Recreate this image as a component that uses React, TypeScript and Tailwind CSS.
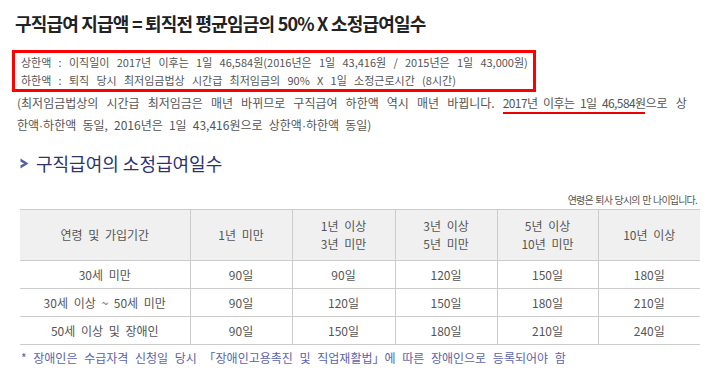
const rows = [
  { label: "30세 미만", days: ["90일", "90일", "120일", "150일", "180일"] },
  { label: "30세 이상 ~ 50세 미만", days: ["90일", "120일", "150일", "180일", "210일"] },
  { label: "50세 이상 및 장애인", days: ["90일", "150일", "180일", "210일", "240일"] },
];

// narrow middle dot (the CJK font draws it full-width)
const Dot = () => <span className="font-['Liberation_Sans']">·</span>;

const App = () => {
  return (
    <div
      className="w-[708px] h-[374px] bg-white text-[#555] overflow-hidden"
      style={{ fontFamily: '"Noto Sans CJK KR", "Noto Sans", sans-serif' }}
    >
      {/* Title */}
      <h1 className="pl-[15px] pt-[10px] h-[50px] text-[18px] font-bold tracking-[-0.8px] text-[#222] leading-[26px]">
        구직급여 지급액 = 퇴직전 평균임금의 50% X 소정급여일수
      </h1>

      {/* Upper / lower limit box */}
      <div className="ml-[12px] w-[524px] border-[3px] border-[#f00] pl-[6px] text-[11px] leading-[18px] [word-spacing:4.8px]">
        <p>상한액 : 이직일이 2017년 이후는 1일 46,584원(2016년은 1일 43,416원 / 2015년은 1일 43,000원)</p>
        <p>하한액 : 퇴직 당시 최저임금법상 시간급 최저임금의 90% X 1일 소정근로시간 (8시간)</p>
      </div>
      <p className="pl-[17px] text-[12px] leading-[22px] whitespace-nowrap [word-spacing:5.4px]">
        (최저임금법상의 시간급 최저임금은 매년 바뀌므로 구직급여 하한액 역시 매년 바뀝니다.{" "}
        <span className="border-b-2 border-[#e00] pb-[1px] tracking-[-0.6px] [word-spacing:3.5px]">
          2017년 이후는 1일 46,584원
        </span>
        으로 상
        <br />
        <span className="[word-spacing:3.5px]">
          한액<Dot />하한액 동일, 2016년은 1일 43,416원으로 상한액<Dot />하한액 동일)
        </span>
      </p>

      {/* Section heading */}
      <div className="flex items-center gap-[7px] pl-[20px] mt-[13px] h-[26px]">
        <svg width="9" height="11" viewBox="0 0 9 11">
          <path d="M0.5 0.5 L8.5 5.5 L0.5 10.5 L0.5 7.3 L4.2 5.5 L0.5 3.7 Z" fill="#5560a0" />
        </svg>
        <h2 className="text-[18px] text-[#2c3370] leading-[26px]">구직급여의 소정급여일수</h2>
      </div>

      <p className="text-right pr-[11px] mt-[15px] text-[10px] leading-[18px] tracking-[-0.8px] [word-spacing:1px]">
        연령은 퇴사 당시의 만 나이입니다.
      </p>

      {/* Table */}
      <table className="ml-[20px] w-[680px] border-collapse text-[12px] text-center table-fixed [word-spacing:3px]">
        <colgroup>
          <col className="w-[170px]" />
          <col className="w-[102px]" />
          <col className="w-[103px]" />
          <col className="w-[102px]" />
          <col className="w-[101px]" />
          <col className="w-[102px]" />
        </colgroup>
        <thead>
          <tr className="bg-[#f0f0f0] h-[51px] border-t border-b border-[#ccc] leading-[18px]">
            <th className="font-normal border-r border-[#ccc]">연령 및 가입기간</th>
            <th className="font-normal border-r border-[#ccc]">1년 미만</th>
            <th className="font-normal border-r border-[#ccc]">
              1년 이상
              <br />
              3년 미만
            </th>
            <th className="font-normal border-r border-[#ccc]">
              3년 이상
              <br />
              5년 미만
            </th>
            <th className="font-normal border-r border-[#ccc]">
              5년 이상
              <br />
              10년 미만
            </th>
            <th className="font-normal">10년 이상</th>
          </tr>
        </thead>
        <tbody>
          {rows.map((row) => (
            <tr key={row.label} className="h-[28px] border-b border-[#ccc]">
              <td className="border-r border-[#ccc]">{row.label}</td>
              {row.days.map((d, i) => (
                <td key={i} className={i < 4 ? "border-r border-[#ccc]" : ""}>
                  {d}
                </td>
              ))}
            </tr>
          ))}
        </tbody>
      </table>

      <p className="pl-[21px] mt-[3px] text-[12px] leading-[20px] text-[#5a63ad] [word-spacing:4px]">
        * 장애인은 수급자격 신청일 당시 「장애인고용촉진 및 직업재활법」에 따른 장애인으로 등록되어야 함
      </p>
    </div>
  );
};

export default App;
